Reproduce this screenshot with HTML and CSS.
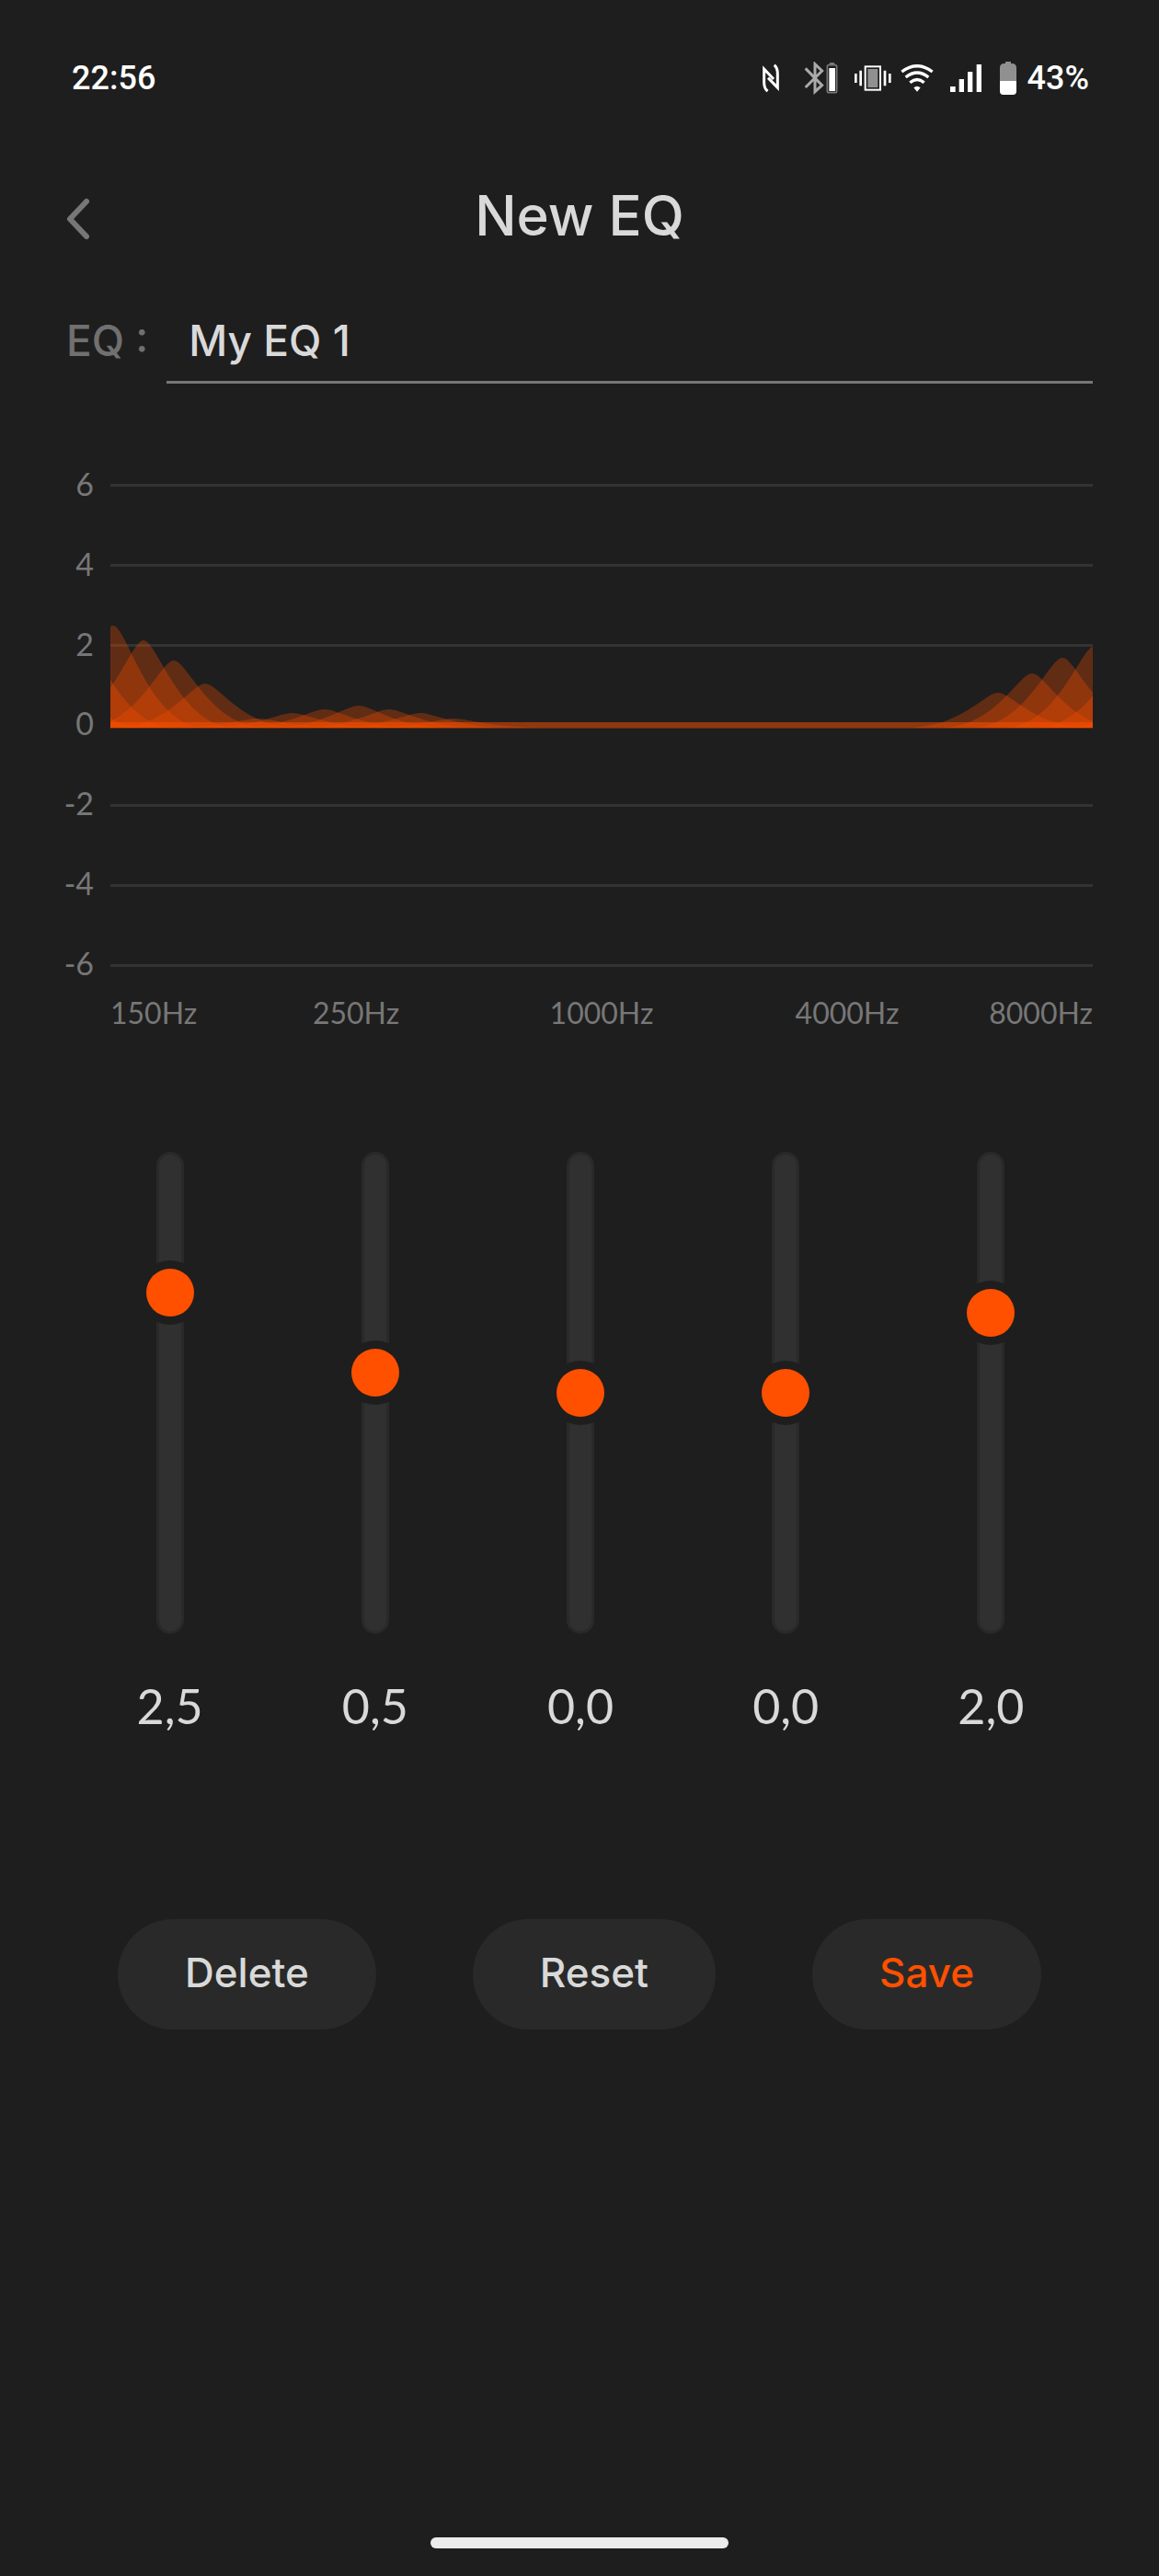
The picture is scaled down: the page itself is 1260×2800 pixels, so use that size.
FILE: index.html
```html
<!DOCTYPE html>
<html lang="en">
<head>
<meta charset="utf-8">
<meta name="viewport" content="width=device-width, initial-scale=1">
<title>New EQ</title>
<link rel="stylesheet" href="styles.css">
</head>
<body>

<div class="status-bar">
 <span>22:56</span>
 <div class="status-icons">
  <svg class="icon-nfc" width="20" height="32" viewBox="0 0 60 96" fill="none" stroke="#fff" stroke-width="9">
   <path d="M23 90Q11 82 11 62V18L42 51"/>
   <path d="M44 5Q55 13 55 34V79L24 47"/>
  </svg>
  <svg class="icon-bluetooth" width="38" height="36" viewBox="0 0 114 108">
   <path d="M8 22L62 77L39 98V8L62 30L8 84" fill="none" stroke="#aaa" stroke-width="9"/>
   <rect x="86" y="3" width="17" height="8" rx="3" fill="#777"/>
   <rect x="79" y="11" width="31" height="90" rx="6" fill="#1e1e1e" stroke="#777" stroke-width="5"/>
   <rect x="85" y="21" width="20" height="75" fill="#fff"/>
  </svg>
  <svg class="icon-vibrate" width="40" height="28" viewBox="0 0 120 84">
   <rect x="35" y="4" width="49" height="76" fill="#1e1e1e" stroke="#fff" stroke-width="6"/>
   <rect x="43" y="12" width="33" height="60" fill="#909090"/>
   <path d="M4 27V57M20 17V67M99 17V67M115 27V57" stroke="#fff" stroke-width="8"/>
  </svg>
  <svg class="icon-wifi" width="36" height="30" viewBox="0 0 108 90" fill="none" stroke="#fff" stroke-width="10">
   <path d="M4 24Q54 -14 104 24M17 42Q54 12 91 42M31 59Q54 40 77 59"/>
   <path d="M43 76Q54 66 65 76L54 89Z" fill="#fff" stroke="none"/>
  </svg>
  <svg class="icon-signal" width="34" height="30" viewBox="0 0 102 90" fill="#fff">
   <path d="M0 72h17v18h-17zM29 48h16v42h-16zM57 24h16v66h-16zM86 0h16v90h-16z"/>
  </svg>
  <svg class="icon-battery" width="18" height="36" viewBox="0 0 54 108">
   <path d="M18 0h18v6h6q12 2 12 14v43H0V20Q0 8 12 6h6z" fill="#909090"/>
   <path d="M0 63h54v34q0 11-11 11H11Q0 108 0 97z" fill="#fff"/>
  </svg>
  <span>43%</span>
 </div>
</div>

<header class="header">
 <button class="back" type="button" aria-label="Back">
  <svg width="26" height="46" viewBox="0 0 26 46" fill="none" stroke="#777" stroke-width="6" stroke-linecap="round" stroke-linejoin="round">
   <path d="M22 4L4 23L22 42"/>
  </svg>
 </button>
 <h1>New EQ</h1>
</header>

<main>
 <div class="name-row">
  <label for="eqName">EQ :</label>
  <input type="text" id="eqName" value="My EQ 1">
 </div>

 <div class="chart">
  <div class="levels">
   <span>6</span>
   <span>4</span>
   <span>2</span>
   <span>0</span>
   <span>-2</span>
   <span>-4</span>
   <span>-6</span>
  </div>
  <svg class="plot" viewBox="0 0 1068 525" preserveAspectRatio="none">
   <path class="grid-lines" d="M0 0h1068v3H0zM0 87h1068v3H0zM0 174h1068v3H0zM0 348h1068v3H0zM0 435h1068v3H0zM0 522h1068v3H0z"/>
   <path class="zero-line" d="M0 259h1068v6H0z"/>
   <path class="zero-edge" d="M0 265h1068v1H0z"/>
   <g id="curves" class="curves"></g>
  </svg>
  <div class="frequencies">
   <span>150Hz</span>
   <span>250Hz</span>
   <span>1000Hz</span>
   <span>4000Hz</span>
   <span>8000Hz</span>
  </div>
 </div>

 <div class="sliders">
  <div class="band">
   <div class="slider">
    <input type="range" id="band150" aria-label="150Hz" min="-6" max="6" step="0.5" value="2.5">
   </div>
   <output for="band150">2,5</output>
  </div>
  <div class="band">
   <div class="slider">
    <input type="range" id="band250" aria-label="250Hz" min="-6" max="6" step="0.5" value="0.5">
   </div>
   <output for="band250">0,5</output>
  </div>
  <div class="band">
   <div class="slider">
    <input type="range" id="band1000" aria-label="1000Hz" min="-6" max="6" step="0.5" value="0">
   </div>
   <output for="band1000">0,0</output>
  </div>
  <div class="band">
   <div class="slider">
    <input type="range" id="band4000" aria-label="4000Hz" min="-6" max="6" step="0.5" value="0">
   </div>
   <output for="band4000">0,0</output>
  </div>
  <div class="band">
   <div class="slider">
    <input type="range" id="band8000" aria-label="8000Hz" min="-6" max="6" step="0.5" value="2">
   </div>
   <output for="band8000">2,0</output>
  </div>
 </div>

 <div class="actions">
  <button type="button">Delete</button>
  <button type="button">Reset</button>
  <button type="button" class="save">Save</button>
 </div>
</main>

<div class="home-bar"></div>

<script>
// centre and height of each bump, in plot units
const bumps = [
 [-63, 73], [-30, 95], [3, 111], [36, 95], [69, 73], [103, 48],
 [160, 10], [198, 16], [233, 20], [270, 24], [303, 20], [337, 16], [373, 10],
 [965, 38], [1002, 59], [1035, 76], [1070, 89], [1104, 76], [1137, 59]
];
const base = 265;

// draw one bell per bump, they overlap and get brighter
function drawCurves() {
 const group = document.getElementById("curves");
 bumps.forEach(([x, height]) => {
  const top = base - height;
  const path = document.createElementNS("http://www.w3.org/2000/svg", "path");
  path.setAttribute("d",
   `M${x - 100} ${base}C${x - 40} ${base} ${x - 15} ${top} ${x} ${top}` +
   `S${x + 40} ${base} ${x + 100} ${base}Z`);
  group.appendChild(path);
 });
}

// show the value with a decimal comma
document.querySelectorAll(".band").forEach((band) => {
 const slider = band.querySelector("input");
 slider.addEventListener("input", () => {
  band.querySelector("output").textContent = Number(slider.value).toFixed(1).replace(".", ",");
 });
});

drawCurves();
</script>

</body>
</html>
```

FILE: styles.css
```css
*, *::before { box-sizing: border-box; }
body {
 margin: 0;
 min-height: 100vh;
 display: flex;
 flex-direction: column;
 background-color: #1e1e1e;
 color: #d9d9d9;
 font-family: Inter, "Liberation Sans", sans-serif;
}
button, input { font-family: inherit; }

.status-bar {
 display: flex;
 justify-content: space-between;
 align-items: center;
 height: 170px;
 padding: 0 76px 0 78px;
 color: #fff;
 font-family: Roboto, sans-serif;
 font-size: 36px;
 font-weight: 500;
}
.status-icons {
 display: flex;
 align-items: center;
}
.icon-nfc { margin-right: 26px; }
.icon-bluetooth { margin-right: 18px; }
.icon-vibrate { margin-right: 10px; }
.icon-wifi { margin-right: 18px; }
.icon-signal { margin-right: 20px; }
.icon-battery { margin-right: 12px; }

.header {
 display: grid;
 grid-template-columns: 1fr auto 1fr;
 align-items: center;
 height: 128px;
 padding: 0 72px;
}
.back {
 display: flex;
 justify-self: start;
 padding: 8px 0 0;
 border: 0;
 background: none;
}
h1 {
 margin: 0;
 font-size: 60px;
 font-weight: 500;
}

.name-row {
 display: flex;
 align-items: stretch;
 gap: 20px;
 margin: 26px 72px 109px;
 font-size: 46px;
 font-weight: 500;
}
.name-row label {
 line-height: 92px;
 color: #707070;
}
.name-row input {
 flex: 1;
 min-width: 0;
 height: 93px;
 padding: 2px 24px 0;
 border: 0;
 border-bottom: 3px solid #777;
 background: none;
 color: inherit;
 font-size: 46px;
 font-weight: 500;
 outline: none;
}

.chart {
 display: grid;
 grid-template-columns: 34px 1fr;
 column-gap: 18px;
 margin: 0 72px 0 68px;
 color: #777;
 font-family: Lato, sans-serif;
 font-size: 32px;
}
.levels {
 display: flex;
 flex-direction: column;
 justify-content: space-between;
 margin: -18px 0 -14px;
 font-size: 34px;
 line-height: 36px;
 text-align: right;
}
.plot {
 display: block;
 width: 100%;
 height: 525px;
}
.grid-lines { fill: #333; }
.zero-line { fill: #ff5000; opacity: 0.5; }
.zero-edge { fill: #ff5000; opacity: 0.3; }
.curves { fill: #ff5000; fill-opacity: 0.3; }
.frequencies {
 grid-column: 2;
 display: grid;
 grid-template-columns: 1fr 2fr 2fr 2fr 1fr;
 margin-top: 30px;
 line-height: 40px;
 text-align: center;
}
.frequencies span:first-child { justify-self: start; }
.frequencies span:last-child { justify-self: end; }

.sliders {
 display: grid;
 grid-template-columns: repeat(5, 1fr);
 margin: 131px 71px 0 73px;
}
.band {
 display: flex;
 flex-direction: column;
 align-items: center;
 gap: 48px;
}
.band output {
 font-family: Lato, sans-serif;
 font-size: 52px;
 line-height: 60px;
}
/* groove and range share one cell, the range is longer so the thumb reaches both ends */
.slider {
 display: grid;
 grid-template: 524px / 52px;
 place-items: center;
}
.slider::before {
 content: "";
 grid-area: 1 / 1;
 width: 30px;
 height: 524px;
 border: 3px solid #292929;
 border-radius: 15px;
 background-color: #303030;
}
.slider input {
 -webkit-appearance: none;
 appearance: none;
 grid-area: 1 / 1;
 writing-mode: vertical-lr;
 direction: rtl;
 width: 52px;
 height: 574px;
 margin: -25px 0;
 background: none;
}
.slider input::-webkit-slider-thumb {
 -webkit-appearance: none;
 width: 52px;
 height: 52px;
 border-radius: 50%;
 background-color: #ff5000;
 box-shadow: 0 0 0 9px #1e1e1e;
}

.actions {
 display: flex;
 justify-content: space-between;
 margin: 202px 128px 0;
}
.actions button {
 height: 120px;
 padding: 0 73px 4px;
 border: 0;
 border-radius: 60px;
 background-color: #292929;
 color: #d9d9d9;
 font-size: 44px;
 font-weight: 500;
}
.actions .save { color: #ff5000; }

.home-bar {
 width: 324px;
 height: 12px;
 margin: auto auto 30px;
 border-radius: 6px;
 background-color: #ececec;
}
```
